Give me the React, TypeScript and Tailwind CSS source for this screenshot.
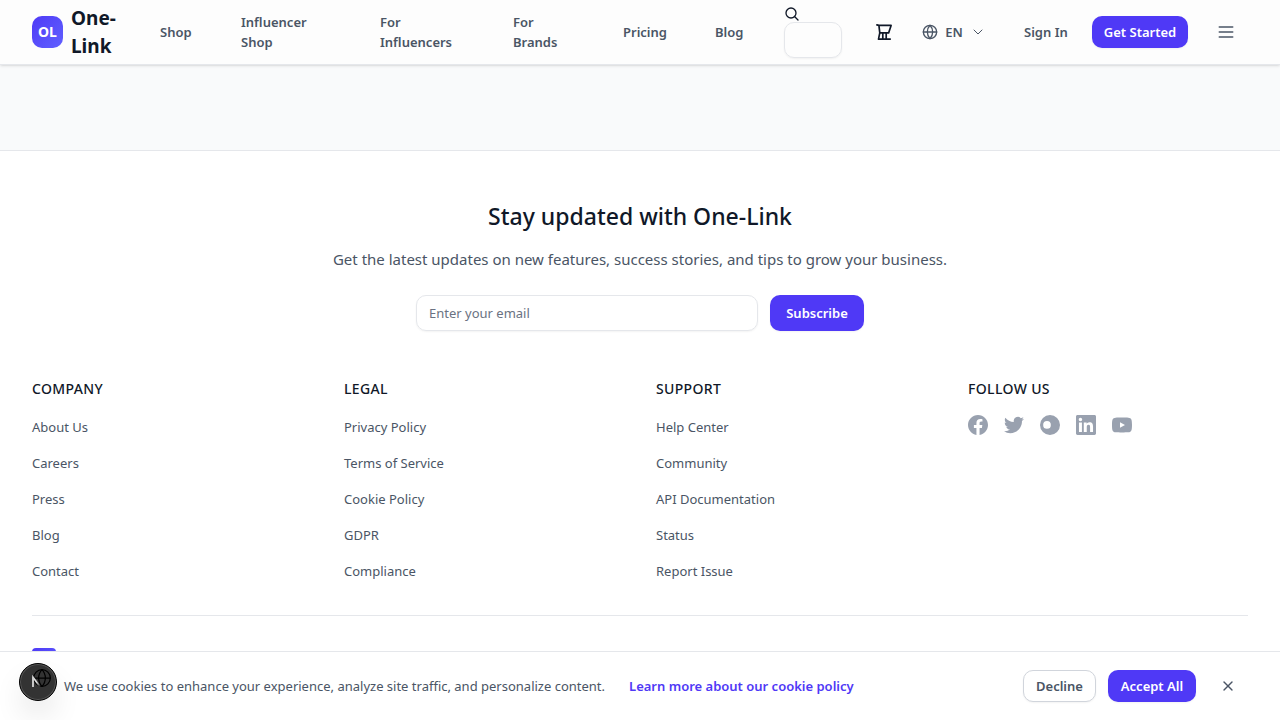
import { ChevronDown, Globe, X } from 'lucide-react';

const navItems = [
  { label: 'Shop', width: 'w-[81px]' },
  { label: 'Influencer Shop', width: 'w-[139px] pr-14' },
  { label: 'For Influencers', width: 'w-[133px] pr-12' },
  { label: 'For Brands', width: 'w-[110px] pr-12' },
  { label: 'Pricing', width: 'w-[92px]' },
  { label: 'Blog', width: 'w-[69px]' },
];

const columns = [
  { title: 'COMPANY', links: ['About Us', 'Careers', 'Press', 'Blog', 'Contact'] },
  { title: 'LEGAL', links: ['Privacy Policy', 'Terms of Service', 'Cookie Policy', 'GDPR', 'Compliance'] },
  { title: 'SUPPORT', links: ['Help Center', 'Community', 'API Documentation', 'Status', 'Report Issue'] },
];

const socials = [
  { name: 'Facebook', d: 'M24 12.073c0-6.627-5.373-12-12-12s-12 5.373-12 12c0 5.99 4.388 10.954 10.125 11.854v-8.385H7.078v-3.47h3.047V9.43c0-3.007 1.792-4.669 4.533-4.669 1.312 0 2.686.235 2.686.235v2.953H15.83c-1.491 0-1.956.925-1.956 1.874v2.25h3.328l-.532 3.47h-2.796v8.385C19.612 23.027 24 18.062 24 12.073z' },
  { name: 'Twitter', d: 'M23.953 4.57a10 10 0 01-2.825.775 4.958 4.958 0 002.163-2.723c-.951.555-2.005.959-3.127 1.184a4.92 4.92 0 00-8.384 4.482C7.69 8.095 4.067 6.13 1.64 3.162a4.822 4.822 0 00-.666 2.475c0 1.71.87 3.213 2.188 4.096a4.904 4.904 0 01-2.228-.616v.06a4.923 4.923 0 003.946 4.827 4.996 4.996 0 01-2.212.085 4.936 4.936 0 004.604 3.417 9.867 9.867 0 01-6.102 2.105c-.39 0-.779-.023-1.17-.067a13.995 13.995 0 007.557 2.209c9.053 0 13.998-7.496 13.998-13.985 0-.21 0-.42-.015-.63A9.935 9.935 0 0024 4.59z' },
  { name: 'Instagram', d: 'M12 0a12 12 0 100 24 12 12 0 000-24zM8.4 7.3a4.6 4.6 0 110 9.2 4.6 4.6 0 010-9.2z' },
  { name: 'LinkedIn', d: 'M20.447 20.452h-3.554v-5.569c0-1.328-.027-3.037-1.852-3.037-1.853 0-2.136 1.445-2.136 2.939v5.667H9.351V9h3.414v1.561h.046c.477-.9 1.637-1.85 3.37-1.85 3.601 0 4.267 2.37 4.267 5.455v6.286zM5.337 7.433c-1.144 0-2.063-.926-2.063-2.065 0-1.138.92-2.063 2.063-2.063 1.14 0 2.064.925 2.064 2.063 0 1.139-.925 2.065-2.064 2.065zm1.782 13.019H3.555V9h3.564v11.452zM22.225 0H1.771C.792 0 0 .774 0 1.729v20.542C0 23.227.792 24 1.771 24h20.451C23.2 24 24 23.227 24 22.271V1.729C24 .774 23.2 0 22.222 0h.003z' },
  { name: 'YouTube', d: 'M19.615 3.184c-3.604-.246-11.631-.245-15.23 0C.488 3.45.029 5.804 0 12c.029 6.185.484 8.549 4.385 8.816 3.6.245 11.626.246 15.23 0C23.512 20.55 23.971 18.196 24 12c-.029-6.185-.484-8.549-4.385-8.816zM9.6 15.2V8.8l6 3.2-6 3.2z' },
];

function CartIcon() {
  return (
    <svg viewBox="0 0 16 16" className="size-4" fill="none" stroke="currentColor" strokeWidth="1.7" strokeLinejoin="round" strokeLinecap="round" aria-hidden="true">
      <path d="M.9.9 2.9 1.4h12.2l-2.5 7.5H3.8L2.9 1.4M3.8 8.9l-1.3 6.2h11.7M6.8 8.9v6.2M10.2 8.9v6.2" />
    </svg>
  );
}

function SearchIcon() {
  return (
    <svg viewBox="0 0 24 24" className="size-4 text-gray-900" fill="none" stroke="currentColor" strokeWidth="2" strokeLinecap="round" role="img" aria-label="Search">
      <path d="m21 21-5.2-5.2" />
      <circle cx="10.5" cy="10.5" r="7.5" />
    </svg>
  );
}

function MenuIcon() {
  return (
    <svg viewBox="0 0 24 24" className="size-5" fill="none" stroke="currentColor" strokeWidth="2" strokeLinecap="round" aria-hidden="true">
      <path d="M4 6h16M4 12h16M4 18h16" />
    </svg>
  );
}

function Header() {
  return (
    <header className="relative z-10 border-b border-gray-200 bg-[#fdfdfd] shadow-sm">
      <div className="flex h-16 items-center px-8">
        <a href="#home" className="flex w-32 shrink-0 items-center gap-2">
          <span className="flex h-8 w-[31px] shrink-0 items-center justify-center rounded-[10px] bg-linear-to-br from-[#4f39f6] to-[#615fff] text-sm font-bold text-white">OL</span>
          <span className="w-14 text-[19px]/7 font-bold text-gray-900">One-Link</span>
        </a>
        <nav className="flex shrink-0 items-center text-[13px]/5 font-semibold text-gray-600">
          {navItems.map((item) => (
            <a key={item.label} href="#nav" className={item.width}>{item.label}</a>
          ))}
        </nav>
        <label className="flex w-[58px] shrink-0 flex-col">
          <SearchIcon />
          <input type="search" className="h-9 w-full rounded-[10px] border border-gray-200 px-3 shadow-xs" />
        </label>
        <div className="ml-auto flex shrink-0 items-center pr-3 text-[13px]/5 font-semibold text-gray-600">
          <button aria-label="Cart" className="text-gray-900"><CartIcon /></button>
          <button className="ml-[30px] flex w-16 items-center justify-between">
            <Globe className="size-4" />
            EN
            <ChevronDown className="size-4" strokeWidth={1.5} />
          </button>
          <a href="#signin" className="ml-[38px] w-[68px]">Sign In</a>
          <button className="h-8 w-24 rounded-[10px] bg-[#4f39f6] text-white shadow-xs">Get Started</button>
          <button aria-label="Menu" className="ml-7"><MenuIcon /></button>
        </div>
      </div>
    </header>
  );
}

function Footer() {
  return (
    <footer className="border-t border-gray-200 bg-white px-8 py-12">
      <div className="text-center">
        <h2 className="mb-3.5 text-[23px]/[34px] font-medium text-gray-900">Stay updated with One-Link</h2>
        <p className="mb-6 text-[15px]/6 text-gray-600">Get the latest updates on new features, success stories, and tips to grow your business.</p>
        <form className="mx-auto flex max-w-md gap-3" onSubmit={(e) => e.preventDefault()}>
          <input type="email" aria-label="Email" placeholder="Enter your email" className="h-9 min-w-0 flex-1 rounded-[10px] border border-gray-200 px-3 text-[13px] shadow-xs placeholder:text-gray-500" />
          <button className="h-9 w-[94px] rounded-[10px] bg-[#4f39f6] text-[13px]/5 font-semibold text-white shadow-xs">Subscribe</button>
        </form>
      </div>
      <div className="mt-12 grid grid-cols-4 gap-8">
        {columns.map((c) => (
          <div key={c.title}>
            <h3 className="mb-4 text-sm/5 font-medium tracking-wide text-gray-900">{c.title}</h3>
            <ul className="space-y-3">
              {c.links.map((l) => (
                <li key={l} className="text-[13px]/6 text-gray-600"><a href="#link">{l}</a></li>
              ))}
            </ul>
          </div>
        ))}
        <div>
          <h3 className="mb-4 text-sm/5 font-medium tracking-wide text-gray-900">FOLLOW US</h3>
          <div className="flex gap-4 text-gray-400">
            {socials.map((s) => (
              <a key={s.name} href="#social" aria-label={s.name}>
                <svg viewBox="0 0 24 24" className="size-5" fill="currentColor" fillRule="evenodd" aria-hidden="true"><path d={s.d} /></svg>
              </a>
            ))}
          </div>
        </div>
      </div>
      <div className="mt-8 border-t border-gray-200 pt-8">
        <div className="size-6 rounded bg-linear-to-br from-[#4f39f6] to-[#615fff]" />
      </div>
    </footer>
  );
}

function CookieBanner() {
  return (
    <div className="fixed inset-x-0 bottom-0 z-20 flex h-[69px] items-center border-t border-gray-200 bg-white pr-8 pl-16 text-[13px]/5">
      <p className="mr-6 text-gray-600">We use cookies to enhance your experience, analyze site traffic, and personalize content.</p>
      <a href="#policy" className="font-semibold text-[#4f39f6]">Learn more about our cookie policy</a>
      <div className="ml-auto flex items-center gap-3">
        <button className="h-8 w-[73px] rounded-[10px] border border-gray-300 bg-white font-semibold text-gray-600 shadow-xs">Decline</button>
        <button className="h-8 w-[88px] rounded-[10px] bg-[#4f39f6] font-semibold text-white shadow-xs">Accept All</button>
        <button aria-label="Close" className="flex w-10 justify-center text-gray-600"><X className="size-4" /></button>
      </div>
      <Globe className="absolute top-4 left-8 size-5 text-black" strokeWidth={1.5} />
    </div>
  );
}

function DevBadge() {
  return (
    <button aria-label="Developer tools" className="fixed bottom-[19px] left-[19px] z-30 flex size-[38px] items-center justify-center rounded-full border border-black bg-black/80 shadow-[inset_0_0_0_1px_#555,0_16px_32px_-8px_rgba(0,0,0,0.24)]">
      <svg viewBox="0 0 16 16" className="size-4" fill="none" strokeWidth="1.6" aria-hidden="true">
        <defs>
          <linearGradient id="badge-fade" x1="3" y1="3" x2="10" y2="13" gradientUnits="userSpaceOnUse">
            <stop offset="0.5" stopColor="#ddd" />
            <stop offset="1" stopColor="#ddd" stopOpacity="0" />
          </linearGradient>
        </defs>
        <path d="M3 13V3.2L10.2 13" stroke="url(#badge-fade)" />
        <path d="M3 13V3" stroke="#ccc" />
      </svg>
    </button>
  );
}

export default function App() {
  return (
    <div className="min-h-screen bg-gray-50 font-['Noto_Sans',sans-serif]">
      <Header />
      <main className="h-[85px]" />
      <Footer />
      <CookieBanner />
      <DevBadge />
    </div>
  );
}
